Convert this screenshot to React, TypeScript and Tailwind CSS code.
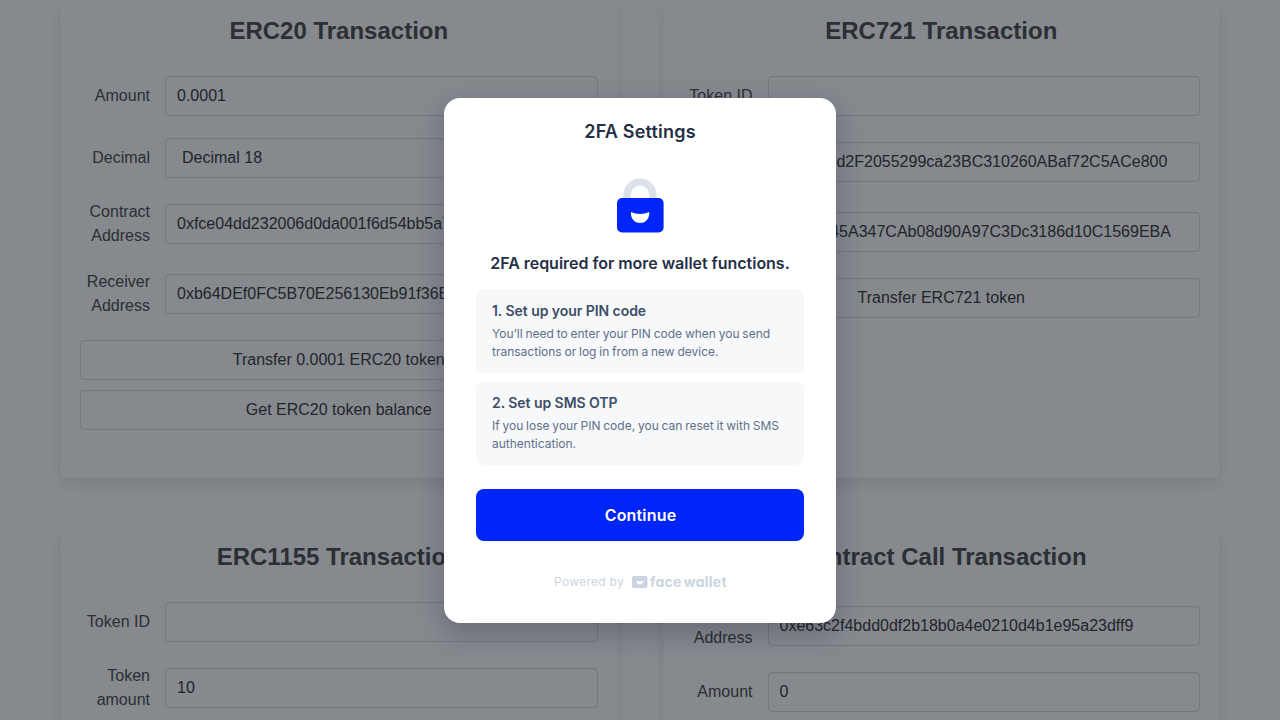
import React from "react";

type Field = { label: string; value?: string; select?: boolean };

function Row({ label, value = "", select }: Field) {
  return (
    <div className="mb-[22px] flex items-center">
      <div className="mr-[15px] w-[70px] shrink-0 text-right leading-6 text-[#4a4a4a]">{label}</div>
      <div
        className={
          "h-10 min-w-0 flex-1 overflow-hidden whitespace-nowrap rounded border border-[#dbdbdb] bg-white leading-[38px] text-[#363636] shadow-[inset_0_1px_2px_rgba(10,10,10,0.05)] " +
          (select ? "px-4" : "px-[11px]")
        }
      >
        {value}
      </div>
    </div>
  );
}

function Card({ title, fields, buttons = [] }: { title: string; fields: Field[]; buttons?: string[] }) {
  return (
    <section className="rounded-md bg-white p-5 shadow-[0_8px_16px_-2px_rgba(10,10,10,0.1),0_0_0_1px_rgba(10,10,10,0.02)]">
      <h2 className="mb-8 text-center text-2xl font-bold leading-[27px] text-[#4a4a4a]">{title}</h2>
      {fields.map((f, i) => (
        <Row key={i} {...f} />
      ))}
      <div className="flex flex-col gap-[10px]">
        {buttons.map((b) => (
          <button key={b} className="h-10 w-full rounded border border-[#dbdbdb] bg-white text-[#363636]">
            {b}
          </button>
        ))}
      </div>
    </section>
  );
}

function Step({ title, text }: { title: string; text: string }) {
  return (
    <div className="h-[84px] rounded-lg bg-[#f6f8fa] px-4 py-3">
      <h4 className="text-sm font-semibold leading-5 tracking-[-0.05px] text-[#3d4e67]">{title}</h4>
      <p className="mt-1 text-xs leading-[18px] text-[#60708a] [word-spacing:-0.55px]">{text}</p>
    </div>
  );
}

function Modal() {
  return (
    <div className="flex h-[525px] w-[392px] flex-col rounded-2xl bg-white px-8 font-['Inter',sans-serif] shadow-[0_10px_28px_rgba(20,22,50,0.27)]">
      <h1 className="mt-5 text-center text-lg font-semibold leading-7 tracking-[0.2px] text-[#253047]">2FA Settings</h1>
      <svg className="mx-auto mt-8 shrink-0" width="48" height="56" viewBox="0 0 48 56">
        <path d="M11.2 24V16.800a12.800 12.800 0 0 1 25.600 0V24" fill="none" stroke="#dce1e9" strokeWidth="7.200" />
        <rect x="1" y="20" width="46.600" height="34.500" rx="5" fill="#0025f9" />
        <path d="M15 34c5.600 2.500 12.600 2.500 18.200 0c.8 6.200-3.500 11-9.100 11S14.200 40.200 15 34z" fill="#fff" />
      </svg>
      <h3 className="mt-[17px] text-center text-base font-semibold leading-6 tracking-[-0.03px] text-[#253047]">
        2FA required for more wallet functions.
      </h3>
      <div className="mt-[14px] flex flex-col gap-2">
        <Step title="1. Set up your PIN code" text="You’ll need to enter your PIN code when you send transactions or log in from a new device." />
        <Step title="2. Set up SMS OTP" text="If you lose your PIN code, you can reset it with SMS authentication." />
      </div>
      <button className="mt-6 h-[52px] shrink-0 rounded-lg bg-[#0025f9] pl-px text-base font-semibold tracking-[0.18px] text-white">
        Continue
      </button>
      <div className="mt-8 flex h-[18px] items-center pl-[78px] text-[#cbd5e1]">
        <span className="w-[78px] whitespace-nowrap text-xs tracking-[0.3px]">Powered by</span>
        <svg className="shrink-0" width="16" height="12" viewBox="0 0 16 12">
          <rect width="15.500" height="12" rx="1.800" fill="#cbd5e1" />
          <path d="M4.600 4.800c2 .8 4.400.8 6.400 0c.2 2-1.300 3.600-3.200 3.600S4.400 6.800 4.600 4.800z" fill="#fff" />
        </svg>
        <span className="ml-[2px] whitespace-nowrap text-[14px] font-bold leading-[18px] tracking-[0.25px] [font-feature-settings:'cv11'] [word-spacing:-1.500px]">
          face wallet
        </span>
      </div>
    </div>
  );
}

export default function App() {
  return (
    <div className="relative h-[720px] w-full overflow-hidden bg-white font-['Liberation_Sans',Arial,sans-serif] text-base">
      <main className="-mt-[3px] grid h-[1007px] grid-cols-2 grid-rows-[481px_481px] gap-[45px] px-[60px]">
        <Card
          title="ERC20 Transaction"
          fields={[
            { label: "Amount", value: "0.0001" },
            { label: "Decimal", value: "Decimal 18", select: true },
            { label: "Contract Address", value: "0xfce04dd232006d0da001f6d54bb5a7" },
            { label: "Receiver Address", value: "0xb64DEf0FC5B70E256130Eb91f36E" },
          ]}
          buttons={["Transfer 0.0001 ERC20 token", "Get ERC20 token balance"]}
        />
        <Card
          title="ERC721 Transaction"
          fields={[
            { label: "Token ID" },
            { label: "Contract Address", value: "0xC1A4d2F2055299ca23BC310260ABaf72C5ACe800" },
            { label: "Receiver Address", value: "0x1fC345A347CAb08d90A97C3Dc3186d10C1569EBA" },
          ]}
          buttons={["Transfer ERC721 token"]}
        />
        <Card
          title="ERC1155 Transaction"
          fields={[{ label: "Token ID" }, { label: "Token amount", value: "10" }]}
        />
        <Card
          title="Contract Call Transaction"
          fields={[
            { label: "Contract Address", value: "0xe63c2f4bdd0df2b18b0a4e0210d4b1e95a23dff9" },
            { label: "Amount", value: "0" },
          ]}
        />
      </main>
      <div className="absolute inset-0 flex items-center justify-center bg-[rgba(14,20,30,0.5)] pt-px">
        <Modal />
      </div>
    </div>
  );
}
